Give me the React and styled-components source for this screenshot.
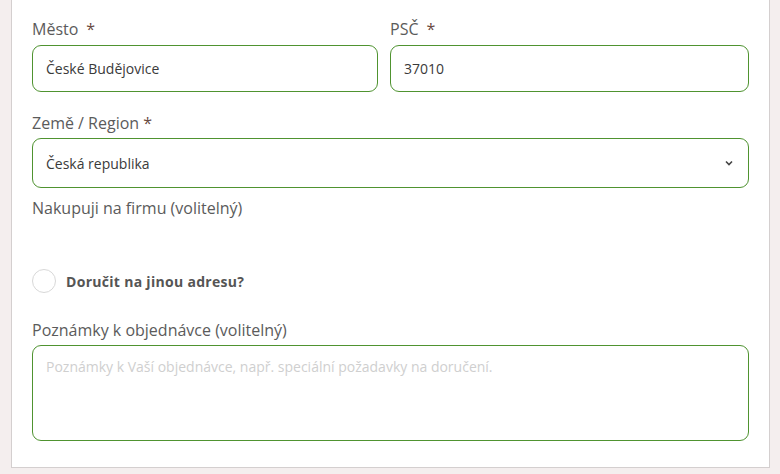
import styled, { createGlobalStyle } from "styled-components";

const GlobalStyle = createGlobalStyle`
  html, body {
    margin: 0;
    padding: 0;
    background: #f4eeee;
    font-family: "Open Sans", "Liberation Sans", sans-serif;
  }
`;

const Card = styled.div`
  box-sizing: border-box;
  width: 759px;
  height: 468px;
  margin-left: 11px;
  background: #fff;
  border: 1px solid #d4cfcf;
  border-top: none;
  padding: 17px 20px 0 20px;
`;

const Row = styled.div`
  display: grid;
  grid-template-columns: 346px 1fr;
  column-gap: 12px;
`;

const Field = styled.div`
  display: flex;
  flex-direction: column;
  margin-bottom: ${(p) => p.$mb || 0}px;
`;

const Label = styled.label`
  font-size: 16px;
  line-height: 24px;
  color: #5b5b5b;
  margin-bottom: ${(p) => p.$mb ?? 4}px;
`;

const Req = styled.span`
  color: #6a4a42;
  margin-left: ${(p) => p.$gap || 4}px;
`;

const Input = styled.div`
  box-sizing: border-box;
  height: ${(p) => p.$h || 47}px;
  border: 1px solid #4f9330;
  border-radius: 9px;
  padding: 0 13px;
  display: flex;
  align-items: center;
  justify-content: space-between;
  font-size: 14px;
  color: #3a3a3a;
`;

const Textarea = styled(Input)`
  align-items: flex-start;
  padding-top: 11px;
  color: #cfcfcf;
`;

const Chevron = styled.svg`
  width: 8px;
  height: 6px;
  margin-right: 2px;
`;

const CheckRow = styled.div`
  display: flex;
  align-items: center;
  gap: 10px;
  margin: 49px 0 25px;
`;

const Circle = styled.span`
  box-sizing: border-box;
  width: 24px;
  height: 24px;
  border-radius: 50%;
  border: 1px solid #d8d8d8;
  background: #fff;
`;

const CheckText = styled.span`
  font-size: 14px;
  font-weight: 700;
  letter-spacing: 0.3px;
  color: #555;
`;

export default function App() {
  return (
    <>
      <GlobalStyle />
      <Card>
        <Row>
          <Field $mb={19}>
            <Label>
              Město<Req $gap={8}>*</Req>
            </Label>
            <Input>České Budějovice</Input>
          </Field>
          <Field $mb={19}>
            <Label>
              PSČ<Req $gap={8}>*</Req>
            </Label>
            <Input>37010</Input>
          </Field>
        </Row>
        <Field>
          <Label $mb={3}>
            Země / Region<Req>*</Req>
          </Label>
          <Input $h={50}>
            Česká republika
            <Chevron viewBox="0 0 8 6">
              <path d="M1 1.5 L4 4.5 L7 1.5" fill="none" stroke="#444" strokeWidth="1.6" />
            </Chevron>
          </Input>
        </Field>
        <Field>
          <Label $mb={0} style={{ marginTop: 8 }}>Nakupuji na firmu (volitelný)</Label>
        </Field>
        <CheckRow>
          <Circle />
          <CheckText>Doručit na jinou adresu?</CheckText>
        </CheckRow>
        <Field>
          <Label $mb={3}>Poznámky k objednávce (volitelný)</Label>
          <Textarea $h={96}>
            Poznámky k Vaší objednávce, např. speciální požadavky na doručení.
          </Textarea>
        </Field>
      </Card>
    </>
  );
}
